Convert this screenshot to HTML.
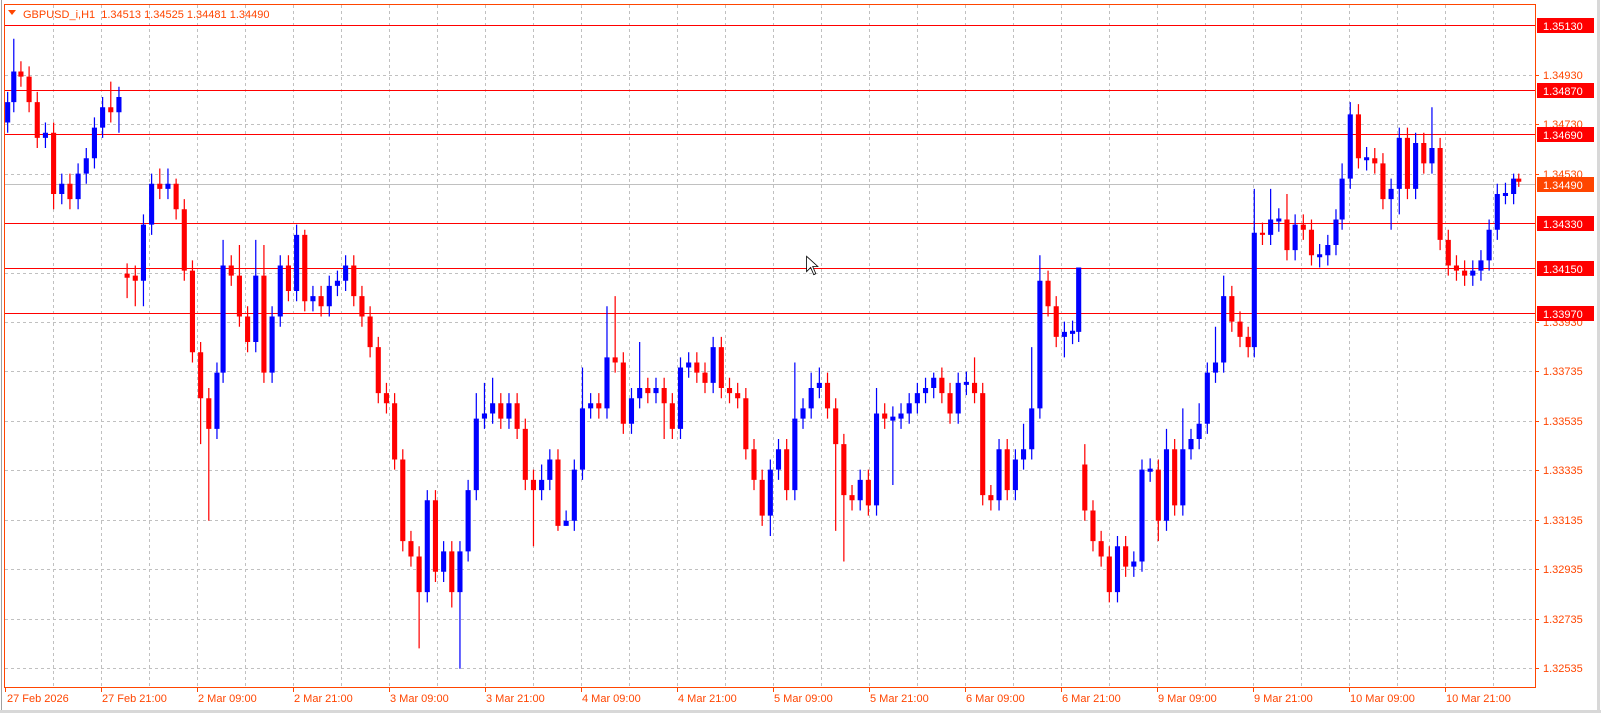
<!DOCTYPE html>
<html><head><meta charset="utf-8"><style>
html,body{margin:0;padding:0;background:#fff;}
body{width:1601px;height:713px;overflow:hidden;position:relative;}
svg{position:absolute;left:0;top:0;display:block;}
text{font-family:"Liberation Sans",sans-serif;font-size:11px;}
</style></head><body>
<svg width="1601" height="713" viewBox="0 0 1601 713" xmlns="http://www.w3.org/2000/svg">
<rect x="0" y="0" width="1601" height="713" fill="#fff"/>
<line x1="1.5" y1="0" x2="1.5" y2="713" stroke="#a0a0a0"/>
<line x1="0" y1="711.5" x2="1601" y2="711.5" stroke="#d8d8d8" stroke-width="3"/>
<line x1="1598.5" y1="0" x2="1598.5" y2="713" stroke="#d8d8d8" stroke-width="3"/>
<g stroke="#c0c0c0" stroke-dasharray="3,3">
<path d="M53.5 5V687M101.5 5V687M149.5 5V687M197.5 5V687M245.5 5V687M293.5 5V687M341.5 5V687M389.5 5V687M437.5 5V687M485.5 5V687M533.5 5V687M581.5 5V687M629.5 5V687M677.5 5V687M725.5 5V687M773.5 5V687M821.5 5V687M869.5 5V687M917.5 5V687M965.5 5V687M1013.5 5V687M1061.5 5V687M1109.5 5V687M1157.5 5V687M1205.5 5V687M1253.5 5V687M1301.5 5V687M1349.5 5V687M1397.5 5V687M1445.5 5V687M1493.5 5V687"/>
<path d="M5 75.5H1535M5 124.5H1535M5 174.5H1535M5 223.5H1535M5 273.5H1535M5 322.5H1535M5 371.5H1535M5 421.5H1535M5 470.5H1535M5 520.5H1535M5 569.5H1535M5 619.5H1535M5 668.5H1535"/>
</g>
<path d="M5 25.5H1535M5 90.5H1535M5 134.5H1535M5 223.5H1535M5 268.5H1535M5 313.5H1535" stroke="#ff0000"/>
<line x1="5" y1="184.5" x2="1535" y2="184.5" stroke="#c0c0c0"/>

<g transform="scale(1.021)">
<path stroke="#0000ff" stroke-width="1.2" fill="none" d="M7.5 90V130M13.5 38V110M44.5 120V145M60.5 170V200M76.5 160V205M84.5 145V180M92.5 115V165M100.5 95V135M116.5 85V130M140.5 210V300M148.5 170V230M164.5 165V195M212.5 355V430M218.5 235V375M250.5 235V345M266.5 300V375M274.5 250V320M290.5 220V295M306.5 280V305M322.5 270V310M330.5 265V290M338.5 250V285M418.5 480V590M434.5 530V570M450.5 530V655M458.5 470V550M466.5 385V490M474.5 375V420M482.5 370V415M498.5 385V420M530.5 455V490M538.5 440V480M554.5 500V515M562.5 450V520M570.5 360V470M578.5 385V410M594.5 300V410M618.5 380V425M626.5 335V400M642.5 370V395M666.5 350V430M674.5 345V370M698.5 330V385M754.5 450V525M762.5 430V470M778.5 355V490M786.5 390V420M794.5 365V410M802.5 360V390M842.5 460V500M858.5 380V505M874.5 398V475M882.5 395V420M890.5 385V415M898.5 375V405M906.5 370V395M914.5 365V390M938.5 365V415M946.5 364V387M978.5 430V500M994.5 440V490M1002.5 415V460M1010.5 340V450M1018.5 250V410M1042.5 315V350M1050.5 314V337M1056.5 262V335M1094.5 525V590M1110.5 540V565M1118.5 450V560M1126.5 449V472M1142.5 420V520M1158.5 400V505M1166.5 420V450M1174.5 395V440M1182.5 355V425M1190.5 320V375M1198.5 270V365M1228.5 185V350M1244.5 185V240M1252.5 204V227M1268.5 210V255M1292.5 239V262M1300.5 230V260M1308.5 205V250M1314.5 160V225M1322.5 100V185M1338.5 144V167M1362.5 175V225M1370.5 125V210M1386.5 130V195M1402.5 105V170M1442.5 255V280M1450.5 245V275M1458.5 215V265M1466.5 180V235M1474.5 179V200M1482.5 170V200"/>
<path stroke="#0000ff" stroke-width="5" fill="none" d="M7.5 100V120M13.5 70V100M44.5 130V135M60.5 180V190M76.5 170V195M84.5 155V170M92.5 125V155M100.5 105V125M116.5 95V110M140.5 220V275M148.5 180V220M164.5 180V185M212.5 365V420M218.5 260V365M250.5 270V335M266.5 310V365M274.5 260V310M290.5 230V285M306.5 290V295M322.5 280V300M330.5 275V280M338.5 260V275M418.5 490V580M434.5 540V560M450.5 540V580M458.5 480V540M466.5 410V480M474.5 405V410M482.5 395V405M498.5 395V410M530.5 470V480M538.5 450V470M554.5 510V515M562.5 460V510M570.5 400V460M578.5 395V400M594.5 350V400M618.5 390V415M626.5 380V390M642.5 380V385M666.5 360V420M674.5 355V360M698.5 340V375M754.5 460V505M762.5 440V460M778.5 410V480M786.5 400V410M794.5 380V400M802.5 375V380M842.5 470V490M858.5 405V495M874.5 408V412M882.5 405V410M890.5 395V405M898.5 385V395M906.5 380V385M914.5 370V380M938.5 375V405M946.5 374V377M978.5 440V490M994.5 450V480M1002.5 440V450M1010.5 400V440M1018.5 275V400M1042.5 325V330M1050.5 324V327M1056.5 262V325M1094.5 535V580M1110.5 550V555M1118.5 460V550M1126.5 459V462M1142.5 440V510M1158.5 440V495M1166.5 430V440M1174.5 415V430M1182.5 365V415M1190.5 355V365M1198.5 290V355M1228.5 228V340M1244.5 215V230M1252.5 214V217M1268.5 220V245M1292.5 249V252M1300.5 240V250M1308.5 215V240M1314.5 175V215M1322.5 112V175M1338.5 154V157M1362.5 185V195M1370.5 135V185M1386.5 140V185M1402.5 145V160M1442.5 265V270M1450.5 255V265M1458.5 225V255M1466.5 190V225M1474.5 189V192M1482.5 175V190"/>

<path stroke="#ff0000" stroke-width="1.2" fill="none" d="M20.5 60V85M28.5 65V110M36.5 90V145M52.5 120V205M68.5 170V205M108.5 80V120M124.5 258V292M132.5 260V300M156.5 165V195M172.5 175V215M180.5 195V275M188.5 255V355M196.5 335V435M204.5 380V510M226.5 250V280M234.5 240V320M242.5 300V345M258.5 240V375M282.5 250V295M298.5 225V305M314.5 280V310M346.5 250V300M354.5 280V320M362.5 300V350M370.5 330V395M378.5 375V405M386.5 385V460M394.5 440V540M402.5 520V555M410.5 535V635M426.5 480V570M442.5 530V595M490.5 385V420M506.5 385V430M514.5 410V480M522.5 460V535M546.5 440V520M586.5 385V410M602.5 290V365M610.5 345V425M634.5 370V395M650.5 370V430M658.5 385V430M682.5 345V375M690.5 355V385M706.5 330V390M714.5 370V395M722.5 375V400M730.5 380V450M738.5 430V480M746.5 460V515M770.5 430V490M810.5 365V410M818.5 390V520M826.5 425V550M834.5 475V500M850.5 460V505M866.5 395V420M922.5 360V395M930.5 375V415M954.5 350V395M962.5 375V495M970.5 475V500M986.5 430V490M1026.5 265V310M1034.5 290V340M1062.5 435V510M1070.5 490V540M1078.5 520V555M1086.5 535V590M1102.5 525V565M1134.5 450V530M1150.5 430V505M1206.5 280V325M1214.5 305V340M1222.5 320V350M1236.5 218V240M1260.5 190V255M1276.5 210V235M1284.5 215V260M1330.5 102V165M1346.5 145V170M1354.5 150V205M1378.5 125V195M1394.5 130V170M1410.5 135V245M1418.5 225V270M1426.5 250V275M1434.5 255V280M1487.5 170V183"/>
<path stroke="#ff0000" stroke-width="5" fill="none" d="M20.5 70V75M28.5 75V100M36.5 100V135M52.5 130V190M68.5 180V195M108.5 105V110M124.5 268V272M132.5 270V275M156.5 180V185M172.5 180V205M180.5 205V265M188.5 265V345M196.5 345V390M204.5 390V420M226.5 260V270M234.5 270V310M242.5 310V335M258.5 270V365M282.5 260V285M298.5 230V295M314.5 290V300M346.5 260V290M354.5 290V310M362.5 310V340M370.5 340V385M378.5 385V395M386.5 395V450M394.5 450V530M402.5 530V545M410.5 545V580M426.5 490V560M442.5 540V580M490.5 395V410M506.5 395V420M514.5 420V470M522.5 470V480M546.5 450V515M586.5 395V400M602.5 350V355M610.5 355V415M634.5 380V385M650.5 380V395M658.5 395V420M682.5 355V365M690.5 365V375M706.5 340V380M714.5 380V385M722.5 385V390M730.5 390V440M738.5 440V470M746.5 470V505M770.5 440V480M810.5 375V400M818.5 400V435M826.5 435V485M834.5 485V490M850.5 470V495M866.5 405V410M922.5 370V385M930.5 385V405M954.5 375V385M962.5 385V485M970.5 485V490M986.5 440V480M1026.5 275V300M1034.5 300V330M1062.5 455V500M1070.5 500V530M1078.5 530V545M1086.5 545V580M1102.5 535V555M1134.5 460V510M1150.5 440V495M1206.5 290V315M1214.5 315V330M1222.5 330V340M1236.5 228V230M1260.5 215V245M1276.5 220V225M1284.5 225V250M1330.5 112V155M1346.5 155V160M1354.5 160V195M1378.5 135V185M1394.5 140V160M1410.5 145V235M1418.5 235V260M1426.5 260V265M1434.5 265V270M1487.5 175V178"/>
<path d="M790,251 L790,266 L794,262 L797,269 L799,268 L796,261 L801,261 Z" fill="#fff" stroke="#000" stroke-width="0.8"/>
</g>

<rect x="4.5" y="4.5" width="1531" height="683" fill="none" stroke="#ff4500"/>
<polygon points="8,10 16,10 12,15" fill="#ff4500"/>
<text x="23" y="18" fill="#ff4500" xml:space="preserve">GBPUSD_i,H1  1.34513 1.34525 1.34481 1.34490</text>

<g stroke="#ff4500">
<path d="M1535 75.5H1539M1535 124.5H1539M1535 174.5H1539M1535 322.5H1539M1535 371.5H1539M1535 421.5H1539M1535 470.5H1539M1535 520.5H1539M1535 569.5H1539M1535 619.5H1539M1535 668.5H1539"/>
<path d="M5.5 687V692M101.5 687V692M197.5 687V692M293.5 687V692M389.5 687V692M485.5 687V692M581.5 687V692M677.5 687V692M773.5 687V692M869.5 687V692M965.5 687V692M1061.5 687V692M1157.5 687V692M1253.5 687V692M1349.5 687V692M1445.5 687V692"/>
</g>
<g fill="#ff4500">
<text x="1543" y="79">1.34930</text>
<text x="1543" y="128">1.34730</text>
<text x="1543" y="178">1.34530</text>
<text x="1543" y="326">1.33930</text>
<text x="1543" y="375">1.33735</text>
<text x="1543" y="425">1.33535</text>
<text x="1543" y="474">1.33335</text>
<text x="1543" y="524">1.33135</text>
<text x="1543" y="573">1.32935</text>
<text x="1543" y="623">1.32735</text>
<text x="1543" y="672">1.32535</text>
</g>
<g fill="#ff0000">
<rect x="1537" y="18" width="57" height="15"/>
<rect x="1537" y="83" width="57" height="15"/>
<rect x="1537" y="127" width="57" height="15"/>
<rect x="1537" y="216" width="57" height="15"/>
<rect x="1537" y="261" width="57" height="15"/>
<rect x="1537" y="306" width="57" height="15"/>
</g>
<rect x="1537" y="177" width="57" height="15" fill="#ff4500"/>
<g fill="#fff">
<text x="1543" y="30">1.35130</text>
<text x="1543" y="95">1.34870</text>
<text x="1543" y="139">1.34690</text>
<text x="1543" y="189">1.34490</text>
<text x="1543" y="228">1.34330</text>
<text x="1543" y="273">1.34150</text>
<text x="1543" y="318">1.33970</text>
</g>
<g fill="#ff4500">
<text x="7" y="702">27 Feb 2026</text>
<text x="102" y="702">27 Feb 21:00</text>
<text x="198" y="702">2 Mar 09:00</text>
<text x="294" y="702">2 Mar 21:00</text>
<text x="390" y="702">3 Mar 09:00</text>
<text x="486" y="702">3 Mar 21:00</text>
<text x="582" y="702">4 Mar 09:00</text>
<text x="678" y="702">4 Mar 21:00</text>
<text x="774" y="702">5 Mar 09:00</text>
<text x="870" y="702">5 Mar 21:00</text>
<text x="966" y="702">6 Mar 09:00</text>
<text x="1062" y="702">6 Mar 21:00</text>
<text x="1158" y="702">9 Mar 09:00</text>
<text x="1254" y="702">9 Mar 21:00</text>
<text x="1350" y="702">10 Mar 09:00</text>
<text x="1446" y="702">10 Mar 21:00</text>
</g>
</svg>
</body></html>
